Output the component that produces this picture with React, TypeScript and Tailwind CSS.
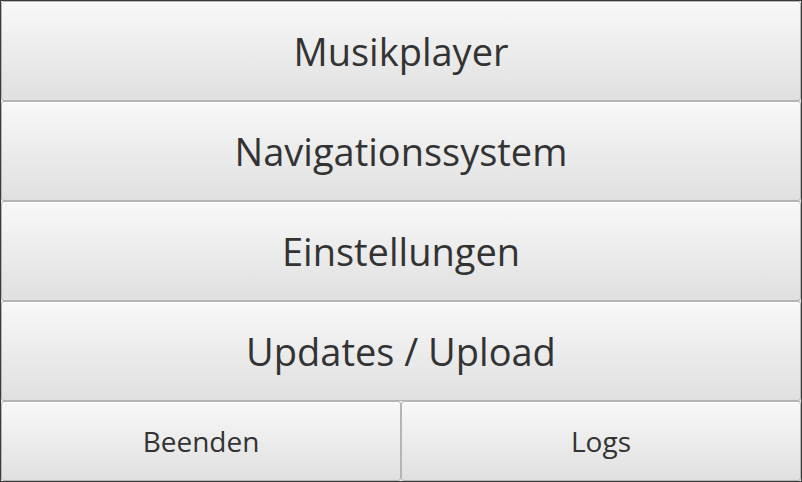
import React from 'react'

type MenuButtonProps = {
  label: string
  big?: boolean
}

const MenuButton = ({ label, big = true }: MenuButtonProps) => {
  return (
    <button
      className={`flex w-full items-center justify-center rounded-[3px] border border-[#b4b4b4] bg-gradient-to-b from-[#f8f8f8] to-[#e0e0e0] text-[#333333] shadow-[inset_0_1px_0_#ffffff] ${
        big ? 'h-[100px] text-[38px]' : 'h-[80px] flex-1 text-[28px]'
      }`}
    >
      {label}
    </button>
  )
}

const App = () => {
  return (
    <div
      className="flex h-[482px] w-[802px] flex-col border border-[#3b3b3b] bg-[#f0f0f0]"
      style={{ fontFamily: '"Open Sans", "Noto Sans", sans-serif' }}
    >
      <MenuButton label="Musikplayer" />
      <MenuButton label="Navigationssystem" />
      <MenuButton label="Einstellungen" />
      <MenuButton label="Updates / Upload" />
      <div className="flex h-[80px]">
        <MenuButton label="Beenden" big={false} />
        <MenuButton label="Logs" big={false} />
      </div>
    </div>
  )
}

export default App
